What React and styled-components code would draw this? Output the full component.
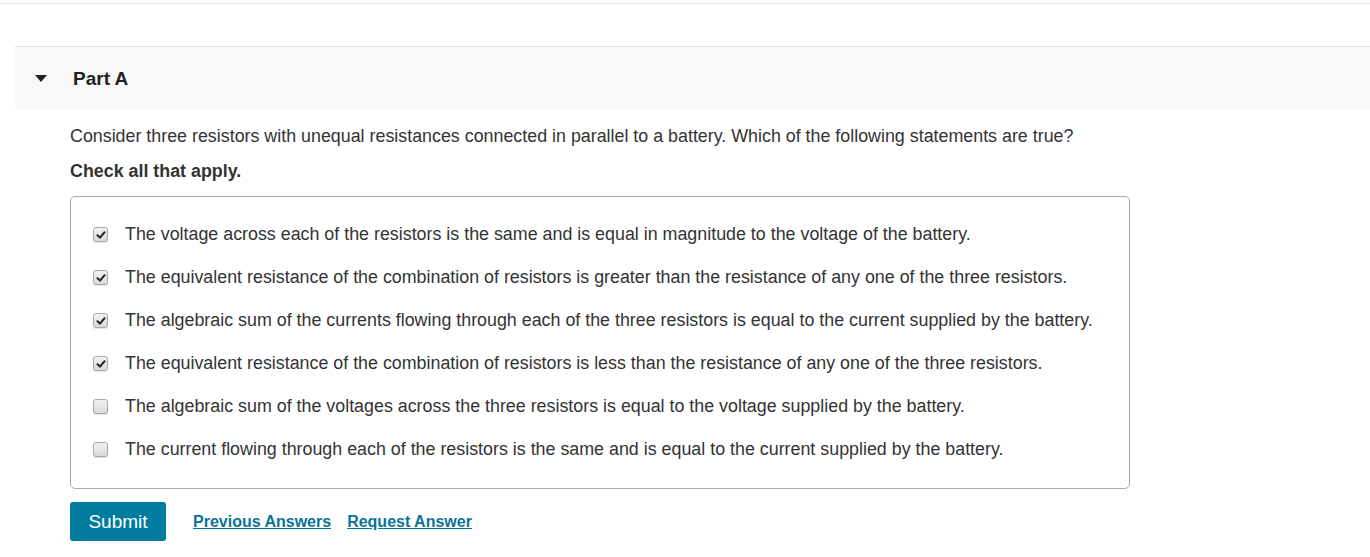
import React from "react";
import styled, { createGlobalStyle } from "styled-components";

const Global = createGlobalStyle`
  html, body { margin: 0; padding: 0; background: #fff; }
  body { font-family: "Liberation Sans", Arial, sans-serif; color: #333; }
`;

const TopRule = styled.div`
  height: 3px;
  border-bottom: 1px solid #e5e5e5;
`;

const Section = styled.section`
  margin-top: 42px;
  margin-left: 15px;
`;

const Header = styled.div`
  display: flex;
  align-items: center;
  height: 62px;
  padding-left: 20px;
  border-top: 1px solid #e2e2e2;
  background: #f8f8f8;
`;

const Caret = styled.span`
  width: 0;
  height: 0;
  border-left: 6px solid transparent;
  border-right: 6px solid transparent;
  border-top: 7px solid #222;
  margin-right: 26px;
  margin-top: 1px;
`;

const Title = styled.h2`
  margin: 0;
  font-size: 19px;
  font-weight: bold;
  color: #222;
  line-height: 22px;
  padding-top: 2px;
`;

const Body = styled.div`
  padding-left: 55px;
  padding-top: 16px;
`;

const Question = styled.p`
  margin: 0;
  font-size: 17.85px;
  line-height: 22px;
  color: #333;
`;

const Instruction = styled.p`
  margin: 13px 0 0;
  font-size: 17.85px;
  line-height: 22px;
  font-weight: bold;
  color: #333;
`;

const OptionBox = styled.div`
  box-sizing: border-box;
  width: 1060px;
  height: 293px;
  margin-top: 14px;
  padding: 16px 0 0 22px;
  border: 1px solid #aaa;
  border-radius: 5px;
`;

const Option = styled.label`
  display: flex;
  align-items: center;
  height: 43px;
  font-size: 17.85px;
  color: #333;
`;

const Box = styled.span`
  box-sizing: border-box;
  width: 15px;
  height: 15px;
  margin-right: 17px;
  flex: none;
  border: 1px solid #a9a9a9;
  border-radius: 3px;
  background: linear-gradient(#f2f2f2, #d9d9d9);
  display: flex;
  align-items: center;
  justify-content: center;
  box-shadow: 0 1px 1px rgba(0, 0, 0, 0.12);
`;

const Actions = styled.div`
  display: flex;
  align-items: center;
  margin-top: 13px;
`;

const SubmitButton = styled.button`
  width: 96px;
  height: 39px;
  border: none;
  border-radius: 3px;
  background: #007c9f;
  color: #fff;
  font-family: "Liberation Sans", Arial, sans-serif;
  font-size: 19px;
  margin-right: 27px;
  padding: 0;
`;

const LinkText = styled.a`
  font-size: 16px;
  font-weight: bold;
  color: #0a7398;
  text-decoration: underline;
  margin-right: ${(p) => p.$gap || 0}px;
`;

const options = [
  { text: "The voltage across each of the resistors is the same and is equal in magnitude to the voltage of the battery.", checked: true },
  { text: "The equivalent resistance of the combination of resistors is greater than the resistance of any one of the three resistors.", checked: true },
  { text: "The algebraic sum of the currents flowing through each of the three resistors is equal to the current supplied by the battery.", checked: true },
  { text: "The equivalent resistance of the combination of resistors is less than the resistance of any one of the three resistors.", checked: true },
  { text: "The algebraic sum of the voltages across the three resistors is equal to the voltage supplied by the battery.", checked: false },
  { text: "The current flowing through each of the resistors is the same and is equal to the current supplied by the battery.", checked: false },
];

function Check({ checked }) {
  return (
    <Box>
      {checked && (
        <svg width="10" height="10" viewBox="0 0 10 10">
          <path d="M1.5 5.2 L4 7.6 L8.6 2.2" fill="none" stroke="#222" strokeWidth="2" strokeLinecap="round" strokeLinejoin="round" />
        </svg>
      )}
    </Box>
  );
}

export default function App() {
  return (
    <>
      <Global />
      <TopRule />
      <Section>
        <Header>
          <Caret />
          <Title>Part A</Title>
        </Header>
        <Body>
          <Question>
            Consider three resistors with unequal resistances connected in parallel to a battery. Which of the following statements are true?
          </Question>
          <Instruction>Check all that apply.</Instruction>
          <OptionBox>
            {options.map((o, i) => (
              <Option key={i}>
                <Check checked={o.checked} />
                {o.text}
              </Option>
            ))}
          </OptionBox>
          <Actions>
            <SubmitButton>Submit</SubmitButton>
            <LinkText href="#" $gap={16}>Previous Answers</LinkText>
            <LinkText href="#">Request Answer</LinkText>
          </Actions>
        </Body>
      </Section>
    </>
  );
}
